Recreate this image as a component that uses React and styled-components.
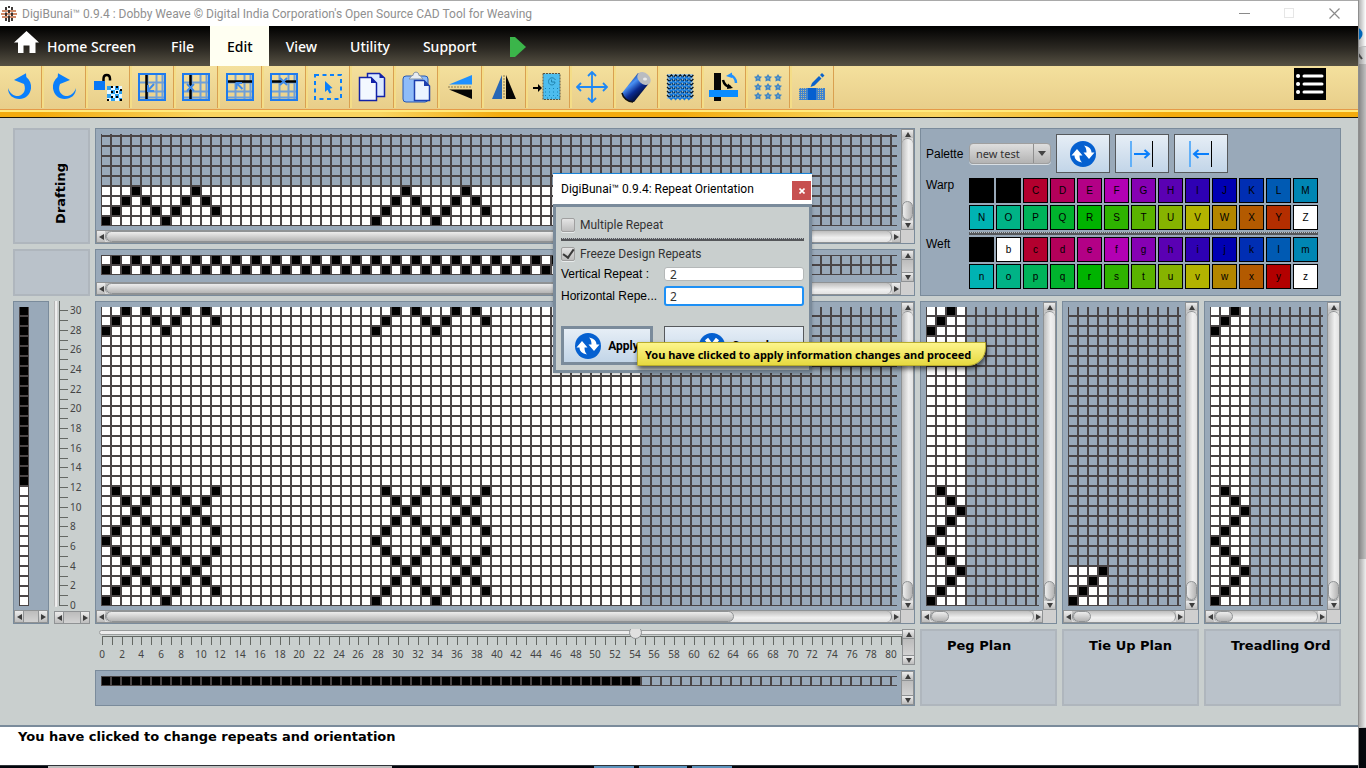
import React from "react";
import styled, { createGlobalStyle } from "styled-components";

const ui = '"Noto Sans", "Open Sans", sans-serif';
const compact = 'Roboto, "Noto Sans", sans-serif';
const plain = '"Liberation Sans", Arial, sans-serif';
const heavy = '"DejaVu Sans", Verdana, sans-serif';
const slate = "#99a9b9";
const slateEdge = "#7a8b9b";

const GlobalStyle = createGlobalStyle`
  * { box-sizing: border-box; }
  body { margin: 0; background: #05080d; font-family: ${plain}; font-size: 12px; color: #000; }
  button, input, select { font: inherit; margin: 0; padding: 0; border-radius: 0; }
`;

/* ---------- window frame ---------- */

const Desktop = styled.div`
  display: grid;
  grid-template-columns: minmax(0, 1fr) 8px;
  min-height: 100vh;
  overflow: hidden;
`;
const Column = styled.div`
  display: flex;
  flex-direction: column;
`;
const AppWindow = styled.div`
  position: relative;
  flex: 1;
  display: flex;
  flex-direction: column;
  background: #c9cfce;
  border-top: 1px solid #a9a9a9;
`;
const TitleBar = styled.header`
  display: flex;
  align-items: center;
  height: 25px;
  background: #fff;
  padding: 0 1px;
`;
const TitleText = styled.h1`
  flex: 1;
  margin: 0 0 0 5px;
  font: 400 12px/16px ${compact};
  color: #8f8f8f;
  white-space: nowrap;
`;
const CaptionButton = styled.button`
  width: 45px;
  height: 25px;
  border: 0;
  background: none;
  color: ${(p) => (p.disabled ? "#e6e6e6" : "#8a8a8a")};
  display: grid;
  place-items: center;
`;

/* ---------- menu ---------- */

const MenuBar = styled.nav`
  display: flex;
  height: 40px;
  background: linear-gradient(#000, #2b2822 55%, #565143);
`;
const MenuLink = styled.a`
  display: flex;
  align-items: center;
  padding: 2px 16px 0 17px;
  font: 500 14px/38px ${ui};
  text-decoration: none;
  white-space: nowrap;
  color: ${(p) => (p.$active ? "#000" : "#fff")};
  background: ${(p) => (p.$active ? "#fffff2" : "none")};
`;
const HomeLink = styled(MenuLink)`
  padding-left: 14px;
  padding-right: 18px;
  gap: 8px;
  & svg { margin-bottom: 10px; }
`;

/* ---------- tool bar ---------- */

const ToolBar = styled.div`
  display: flex;
  height: 43px;
  background: linear-gradient(#f4e09d, #e8ce8a);
`;
const ToolGroup = styled.div`
  display: flex;
`;
const Tool = styled.button`
  width: 44px;
  height: 42px;
  padding: 0 6px 0 4px;
  border: solid #f4dd88;
  border-width: 0 0 0 2px;
  box-shadow: inset -1px 0 #d9a050;
  background: none;
  display: grid;
  place-items: center;
  &:first-child {
    width: 42px;
    border-left: 0;
  }
`;
const ListTool = styled.button`
  margin: 2px 32px 0 auto;
  width: 32px;
  height: 32px;
  border: 0;
  background: none;
`;
const GoldStrip = styled.div`
  height: 9px;
  border-top: 1px solid #e59a48;
  border-bottom: 1px solid #1c1608;
  background:
    linear-gradient(#ffe97c, #ffe97c) 0 0 / 100% 2px no-repeat,
    linear-gradient(90deg, #f3ab0e 3%, #f9d460 15%, #f9d460 28%, #f3ab0e 37%, #f3ab0e 50%, #f7d055 62%, #f9d460 69%, #f3ab0e 86%);
`;

/* ---------- workspace ---------- */

const Workspace = styled.main`
  display: grid;
  grid-template-columns: 36px 36px minmax(0, 1fr) 137px 137px 137px;
  grid-template-rows: 116px 47px 323px 36px 36px;
  gap: 5px;
  padding: 10px 17px 19px 13px;
`;
const CaptionBox = styled.section`
  grid-area: ${(p) => p.$area};
  display: flex;
  align-items: ${(p) => (p.$vertical ? "center" : "flex-start")};
  justify-content: ${(p) => (p.$vertical ? "flex-end" : "flex-start")};
  padding: ${(p) => (p.$vertical ? "14px 18px 0 0" : "6px 0 0 25px")};
  background: #bac2ca;
  border: 2px solid #afb6bd;
  overflow: hidden;
`;
const Caption = styled.h2`
  margin: 0;
  font: 700 13px/18px ${heavy};
  white-space: nowrap;
  ${(p) => p.$vertical && "writing-mode: vertical-rl; transform: rotate(180deg);"}
`;
const Pane = styled.section`
  grid-area: ${(p) => p.$area};
  display: grid;
  grid-template-columns: minmax(0, 1fr) auto;
  grid-template-rows: minmax(0, 1fr) auto;
  background: ${slate};
  border: 1px solid ${slateEdge};
  min-width: 0;
`;
const View = styled.div`
  padding: 5px 0 0 5px;
  overflow: hidden;
  & svg { display: block; }
`;
const Corner = styled.div`
  background: #cfcfcf;
`;
const Bar = styled.div`
  display: flex;
  flex-direction: ${(p) => (p.$v ? "column" : "row")};
  ${(p) => (p.$v ? "width: 13px;" : "height: 13px;")}
  background: linear-gradient(${(p) => (p.$v ? "90deg" : "180deg")}, #c4c4c4, #dcdcdc);
  border: 1px solid #8f9294;
`;
const BarButton = styled.button`
  flex: none;
  width: ${(p) => (p.$v ? "11px" : "8px")};
  height: ${(p) => (p.$v ? "8px" : "11px")};
  border: 0;
  background: linear-gradient(#ececec, #bdbdbd);
  display: grid;
  place-items: center;
`;
const Track = styled.div`
  flex: 1;
  display: flex;
  flex-direction: ${(p) => (p.$v ? "column" : "row")};
  justify-content: ${(p) => (p.$end ? "flex-end" : "flex-start")};
  ${(p) => (p.$v ? "border-width: 1px 0;" : "border-width: 0 1px;")}
  border-style: solid;
  border-color: #8f9294;
  border-radius: ${(p) => (p.$empty ? "0" : "6px")};
  background: ${(p) =>
    p.$empty
      ? "linear-gradient(#bcbcbc, #d2d2d2)"
      : p.$v
        ? "linear-gradient(90deg, #bdbdbd, #f0f0f0 60%, #e2e2e2)"
        : "linear-gradient(#bdbdbd, #f0f0f0 60%, #e2e2e2)"};
`;
const Thumb = styled.div`
  ${(p) => (p.$v ? "height" : "width")}: ${(p) => p.$size};
  ${(p) => (p.$v ? "width" : "height")}: 11px;
  border: 1px solid #8f9294;
  border-radius: 6px;
  background: linear-gradient(${(p) => (p.$v ? "90deg" : "180deg")}, #ededed, #b4b4b4);
`;

function Scroll({ v, thumb, end }) {
  const [a, b] = v ? ["0,5 3,0 6,5", "0,0 6,0 3,5"] : ["5,0 0,3 5,6", "0,0 5,3 0,6"];
  const size = v ? { width: 6, height: 5 } : { width: 5, height: 6 };
  return (
    <Bar $v={v}>
      <BarButton $v={v} type="button" aria-label={v ? "Scroll up" : "Scroll left"}>
        <svg {...size}><polygon points={a} fill="#3c3c3c" /></svg>
      </BarButton>
      <Track $v={v} $end={end} $empty={!thumb}>{thumb && <Thumb $v={v} $size={thumb} />}</Track>
      <BarButton $v={v} type="button" aria-label={v ? "Scroll down" : "Scroll right"}>
        <svg {...size}><polygon points={b} fill="#3c3c3c" /></svg>
      </BarButton>
    </Bar>
  );
}

/* ---------- weave drawing: 8px cells on a 10px pitch ---------- */

function Weave({ width, height, top = 0, filled, marks }) {
  const h = [];
  for (let y = top - 2; y < height; y += 10) h.push(`M0 ${y}h${width}v2H0z`);
  const v = [];
  for (let x = -1; x < width; x += 10) v.push(`M${x} 0h2v${height}h-2z`);
  return (
    <svg width={width} height={height} shapeRendering="crispEdges">
      {filled && (
        <rect x="0" y={top + filled.row * 10} width={filled.cols * 10} height={height - top - filled.row * 10} fill="#fff" />
      )}
      <path d={h.join("") + v.join("")} fill="#4a4546" />
      <path d={marks.map(([c, r]) => `M${c * 10 + 1} ${top + r * 10}h8v8h-8z`).join("")} fill="#000" />
    </svg>
  );
}

/* columns lifted by each shaft, and the shaft used by each pick from the bottom up */
const threads = [[0, 6], [1, 5, 7, 11], [2, 4, 8, 10], [3, 9]];
const treadles = [0, 1, 2, 3, 2, 1, 0, 1, 2, 3, 2, 1];
const twice = (cells) => cells.concat(cells.map(([c, r]) => [c + 27, r]));
const draft = twice(threads.flatMap((cols, i) => cols.map((c) => [c, 8 - i])));
const picks = [...treadles.map((shaft, i) => [29 - i, shaft]), [2, 0], [1, 1], [0, 2]];
const design = twice(picks.flatMap(([row, shaft]) => threads[shaft].map((c) => [c, row])));
const peg = picks.map(([row, shaft]) => [shaft, row]);
const plain54 = Array.from({ length: 54 }, (_, c) => [c, c % 2 ? 0 : 1]);
const warpLine = Array.from({ length: 54 }, (_, c) => [c, 0]);
const weftLine = Array.from({ length: 18 }, (_, r) => [0, r]);
const tie = [0, 1, 2, 3].map((i) => [i, 29 - i]);

function PlanPane({ area, filled, marks }) {
  return (
    <Pane $area={area}>
      <View><Weave width={113} height={299} filled={filled} marks={marks} /></View>
      <Scroll v thumb="19px" end />
      <Scroll thumb="18px" />
      <Corner />
    </Pane>
  );
}

/* ---------- rulers ---------- */

const SideRuler = styled.section`
  grid-area: 3 / 2 / 4 / 3;
  display: grid;
  grid-template-columns: 5px 1fr;
  grid-template-rows: minmax(0, 1fr) auto;
  overflow: hidden;
  & > :last-child { grid-column: 1 / 3; }
`;
const SideRange = styled.input`
  appearance: none;
  writing-mode: vertical-lr;
  direction: rtl;
  width: 4px;
  height: 306px;
  border-radius: 0 0 3px 3px;
  background: linear-gradient(90deg, #9b9b9b, #f2f2f2 40%, #ececec 80%, #a5a5a5);
  &::-webkit-slider-thumb { appearance: none; width: 0; height: 0; }
`;
const BaseRuler = styled.section`
  grid-area: 4 / 3 / 5 / 4;
  display: grid;
  grid-template-columns: minmax(0, 1fr) auto;
`;
const BaseScale = styled.div`
  overflow: hidden;
  & svg { display: block; }
`;
const BaseRange = styled.input`
  appearance: none;
  position: relative;
  z-index: 1;
  display: block;
  width: 808px;
  height: 7px;
  && { margin-left: 4px; }
  background: none;
  &::-webkit-slider-runnable-track {
    height: 5px;
    border: 1px solid #9a9d9d;
    border-radius: 3px;
    background: #ececec;
  }
  &::-webkit-slider-thumb {
    appearance: none;
    width: 13px;
    height: 13px;
    margin-top: -5px;
    border: 1px solid #8f9294;
    border-radius: 50%;
    background: #e0e0e0;
  }
`;

function SideTicks() {
  return (
    <svg width="31" height="311" shapeRendering="crispEdges">
      <path d="M0.5 0V305" stroke="#646864" />
      {Array.from({ length: 31 }, (_, n) => (
        <path key={n} d={`M0 ${Math.round(304 - n * 9.83) + 0.5}H9`} stroke="#646864" />
      ))}
      {Array.from({ length: 16 }, (_, n) => (
        <text key={n} x="11" y={Math.round(308 - n * 19.66)} fontFamily="Noto Sans" fontSize="10" fill="#444">{n * 2}</text>
      ))}
    </svg>
  );
}

function BaseTicks() {
  return (
    <svg width="812" height="29" shapeRendering="crispEdges">
      <path d="M7 0.5H812" stroke="#646864" />
      {Array.from({ length: 82 }, (_, n) => (
        <path key={n} d={`M${Math.round(7 + n * 9.865) + 0.5} 0V9`} stroke="#646864" />
      ))}
      {Array.from({ length: 41 }, (_, n) => (
        <text key={n} x={Math.round(7 + n * 19.73)} y="22" textAnchor="middle" fontFamily="Noto Sans" fontSize="10" fill="#444">{n * 2}</text>
      ))}
    </svg>
  );
}

/* ---------- palette ---------- */

const PalettePanel = styled.section`
  grid-area: 1 / 4 / 3 / 7;
  display: grid;
  grid-template-columns: 43px auto;
  grid-template-rows: 42px 52px 3px 52px;
  row-gap: 2px;
  justify-content: start;
  padding: 5px;
  background: ${slate};
  border: 1px solid ${slateEdge};
`;
const PaletteLabel = styled.label`
  font: 12px/14px ${plain};
  padding-top: ${(p) => (p.$tall ? "13px" : "0")};
`;
const PaletteTools = styled.div`
  display: flex;
  align-items: center;
  gap: 5px;
  height: 39px;
`;
const Combo = styled.div`
  display: flex;
  width: 82px;
  height: 21px;
  border: 1px solid #9f9f9f;
  border-radius: 4px;
  background: linear-gradient(#dedede, #b3b3b3);
  box-shadow: 0 1px #d9dfe4;
`;
const ComboSelect = styled.select`
  flex: 1;
  min-width: 0;
  appearance: none;
  border: 0;
  padding-left: 6px;
  background: none;
  color: #333;
  font: 11px/19px ${ui};
`;
const ComboArrow = styled.span`
  width: 17px;
  border-left: 1px solid #8f8f8f;
  display: grid;
  place-items: center;
`;
const IconButton = styled.button`
  width: 54px;
  height: 39px;
  border: 1px solid #56595c;
  background: linear-gradient(#e6eef6, #c2d5e8);
  display: grid;
  place-items: center;
`;
const Swatches = styled.div`
  display: grid;
  grid-template-columns: repeat(13, 25px);
  grid-auto-rows: 25px;
  gap: 2px;
`;
const Swatch = styled.button`
  border: 1px solid #000;
  background: ${(p) => p.$c};
  color: #000;
  font: 10px/12px ${plain};
`;
const Rule = styled.hr`
  margin: 0;
  width: 100%;
  height: 3px;
  border: 0;
  grid-column: ${(p) => p.$col || "auto"};
  background: repeating-linear-gradient(90deg, #56595c 0 1px, #b9bfc4 1px 2px) 0 0 / 100% 1px no-repeat, #55575a;
`;

const shades = [
  "#b3002e", "#b3005a", "#b30086", "#b300b3", "#8600b3", "#5a00b3", "#2e00b3", "#0000b3", "#002eb3", "#005ab3", "#0086b3",
  "#00b3b3", "#00b386", "#00b35a", "#00b32e", "#00b300", "#2eb300", "#5ab300", "#86b300", "#b3b300", "#b38600", "#b35a00",
];
const warp = ["#000", "#000", ...shades, "#b32e00", "#fff"];
const weft = ["#000", "#fff", ...shades, "#b30000", "#fff"];

/* ---------- dialog ---------- */

const Dialog = styled.div`
  position: absolute;
  left: 553px;
  top: 172px;
  width: 259px;
  border-top: 1px solid #1883d7;
  background: #c9cfce;
  box-shadow: 0 1px 3px rgba(0, 0, 0, 0.25);
`;
const DialogTitle = styled.div`
  display: flex;
  align-items: center;
  height: 30px;
  padding: 0 1px 0 8px;
  background: #fff;
`;
const DialogHeading = styled.h2`
  flex: 1;
  margin: 0;
  font: 400 12px/16px ${compact};
  white-space: nowrap;
`;
const CloseButton = styled.button`
  width: 19px;
  height: 19px;
  margin-top: 3px;
  border: 0;
  background: #c75050;
  display: grid;
  place-items: center;
`;
const Form = styled.form`
  display: flex;
  flex-direction: column;
  gap: 5px;
  padding: 10px 5px 5px;
  border: 3px solid ${slateEdge};
`;
const CheckRow = styled.label`
  display: flex;
  align-items: center;
  gap: 5px;
  height: 16px;
  font: 12px/16px ${compact};
  color: #333;
`;
const Check = styled.input`
  appearance: none;
  width: 14px;
  height: 14px;
  border: 1px solid #a0a0a0;
  border-radius: 2px;
  background: linear-gradient(#e4e4e4, #bdbdbd);
  box-shadow: 0 1px #e8ecec;
  display: grid;
  place-items: center;
  &:checked::before {
    content: "";
    width: 5px;
    height: 9px;
    margin-top: -3px;
    border: solid #3a3a3a;
    border-width: 0 2px 2px 0;
    transform: rotate(35deg);
  }
`;
const FieldRow = styled.label`
  display: grid;
  grid-template-columns: 103px 140px;
  grid-template-rows: 100%;
  align-items: center;
  height: ${(p) => p.$h};
  font: 12px/14px ${plain};
  white-space: nowrap;
`;
const Field = styled.input`
  width: 100%;
  height: 100%;
  min-width: 0;
  padding-left: ${(p) => (p.$focus ? "4px" : "5px")};
  border: ${(p) => (p.$focus ? "2px solid #1e90f5" : "1px solid #b4b8b8")};
  border-radius: 3px;
  background: #fff;
  color: #333;
  font: 12px/16px ${ui};
  outline: none;
`;
const Actions = styled.div`
  display: flex;
  gap: 11px;
  margin-top: 15px;
`;
const ActionButton = styled.button`
  flex: ${(p) => (p.$wide ? "1" : "0 0 92px")};
  height: 39px;
  display: flex;
  align-items: center;
  justify-content: center;
  gap: 7px;
  border: ${(p) => (p.$wide ? "1px solid #56595c" : `3px solid ${slateEdge}`)};
  background: linear-gradient(#e6eef6, #c2d5e8);
  font: 700 12px/16px ${compact};
`;
const Tip = styled.div`
  position: absolute;
  left: 637px;
  top: 341px;
  height: 24px;
  padding: 0 14px 0 7px;
  border: 1px solid #b9ad2c;
  border-radius: 0 0 18px 0;
  background: linear-gradient(#fdf58c, #e6d940);
  box-shadow: 1px 3px 5px rgba(0, 0, 0, 0.6);
  font: 700 11px/23px ${ui};
  white-space: nowrap;
`;

/* ---------- bottom and right edges ---------- */

const StatusBar = styled.footer`
  flex: 1;
  min-height: 40px;
  padding: 1px 18px;
  border-top: 2px solid ${slateEdge};
  background: #fff;
  font: 700 13px/18px ${heavy};
`;
const TaskEdge = styled.div`
  height: 3px;
  border-top: 1px solid #30343a;
  background: linear-gradient(90deg, #02060c 48px, #bfbfbf 48px 392px, #02060c 392px 594px, #5b93bd 594px 634px, #02060c 634px 639px, #5b93bd 639px 687px, #02060c 687px 692px, #5b93bd 692px 732px, #02060c 732px);
`;
const BackWindow = styled.div`
  display: flex;
  flex-direction: column;
  border-left: 1px solid #8e8e8e;
`;
const BackPart = styled.div`
  flex: ${(p) => p.$flex || `0 0 ${p.$h}`};
  background: linear-gradient(90deg, rgba(0, 0, 0, 0.3), rgba(0, 0, 0, 0) 7px), ${(p) => p.$c};
  border-bottom: ${(p) => (p.$line ? "1px solid #c0c0c0" : "0")};
  overflow: hidden;
  & svg { display: block; }
`;

/* ---------- icons ---------- */

const B = "#0a7ffb";

function Sync({ size = 26 }) {
  return (
    <svg width={size} height={size} viewBox="0 0 26 26">
      <circle cx="13" cy="13" r="13" fill="#0560d0" />
      <path d="M7 8L1.500 14.500H4.500C4.500 18 7 20.500 12 21.500C10 19.500 9.500 17 9.500 14.500H12.500z" fill="#fff" />
      <path d="M19 18L24.500 11.500H21.500C21.500 8 19 5.500 14 4.500C16 6.500 16.500 9 16.500 11.500H13.500z" fill="#fff" />
    </svg>
  );
}
const GridBase = ({ children }) => (
  <>
    <path d="M3 11.500H29M3 20.500H29M3 26.500H29M11.500 3V29M20.500 3V29M26.500 3V29" stroke="#6f9fd8" strokeWidth="2" fill="none" />
    <rect x="3" y="3" width="26" height="26" fill="none" stroke="#1f7bee" strokeWidth="2" />
    {children}
  </>
);
const star = "M0-4L1.400-1.800L4-1.300L2.200.7L2.600 3.500L0 2.400L-2.600 3.500L-2.200.7L-4-1.300L-1.400-1.800z";
const curl = "M10 9L22 2.300L22.300 6C26 9 27.500 13 27 17.500C26 24 21 28 15.500 28C9 28 4 24 4 17C6 23 10.500 25.500 14.500 25C19.500 24 22.500 19 20 13z";
const zigzag = (offset) =>
  Array.from({ length: 6 }, (_, i) => `M${3 + offset} ${4 + i * 4 + offset}` + "l2.200 2.200l2.200-2.200".repeat(offset ? 5 : 6)).join("");

const tools = [
  ["Undo", <path d={curl} fill={B} />],
  ["Redo", <path d={curl} fill={B} transform="matrix(-1 0 0 1 32 0)" />],
  ["Lock design", <>
    <path d="M11.500 10V8C11.500 2.500 18 2.500 18 8V9.500" fill="none" stroke="#000" strokeWidth="2.500" />
    <rect x="2" y="10" width="11" height="9" fill="#0877f5" />
    <rect x="15" y="15" width="15" height="15" fill="#2b9ff0" />
    <path d="M19 15h4v4h-4zM27 15h3v4h-3zM15 19h4v4h-4zM23 19h4v4h-4zM19 23h4v4h-4zM27 23h3v4h-3zM15 27h4v3h-4zM23 27h4v3h-4z" fill="#e6f8ff" />
    <path d="M19 15h2v2h-2zM24 15h2v2h-2zM28 18h2v2h-2zM19 20h2v2h-2zM24 20h2v2h-2zM19 25h2v2h-2zM24 25h2v2h-2zM15 28h2v2h-2zM28 28h2v2h-2z" fill="#000" />
  </>],
  ["Insert warp", <GridBase><path d="M10.500 4V28" stroke="#000" strokeWidth="2.500" /><path d="M18 13L12.500 19M12 14V20H18" stroke="#3f8bea" strokeWidth="2" fill="none" /></GridBase>],
  ["Delete warp", <GridBase><path d="M10.500 4V28" stroke="#000" strokeWidth="2.500" /><path d="M7 13L14 20M14 13L7 20" stroke="#3f8bea" strokeWidth="1.800" /></GridBase>],
  ["Insert weft", <GridBase><path d="M4 10.500H28" stroke="#000" strokeWidth="2.500" /><path d="M18.500 18L13 12.500M12.500 18V12H18" stroke="#3f8bea" strokeWidth="2" fill="none" /></GridBase>],
  ["Delete weft", <GridBase><path d="M4 10.500H28" stroke="#000" strokeWidth="2.500" /><path d="M12 7L19 14M19 7L12 14" stroke="#3f8bea" strokeWidth="1.800" /></GridBase>],
  ["Select", <><rect x="3" y="4" width="26" height="24" fill="none" stroke={B} strokeWidth="2" strokeDasharray="4 3.500" /><path d="M13 10V21L15.500 18.800L17.500 22.500L19.500 21.500L17.700 17.700L20.500 17z" fill={B} /></>],
  ["Copy", <><path d="M11.500 2.500H23.500L28.500 7V25.500H11.500z" fill="#dbe9ff" stroke="#1222a8" strokeWidth="1.500" /><path d="M3.500 6.500H15L20.500 12V29.500H3.500z" fill="#f3f8ff" stroke="#1222a8" strokeWidth="1.500" /><path d="M15 6.500V12H20.500zM23.500 2.500V7H28.500z" fill="#1222a8" /></>],
  ["Paste", <><rect x="3" y="5" width="25" height="26" rx="3" fill="#8fbcf8" stroke="#2456b4" /><path d="M9 8L12 4.500H13C13 0 19 0 19 4.500H20L23 8z" fill="#e8edf2" stroke="#8794a5" /><path d="M14.500 9.500H24L29.500 15V29.500H14.500z" fill="#eaf4ff" stroke="#1c3fae" strokeWidth="1.500" /><path d="M24 9.500V15H29.500z" fill="#1c3fae" /></>],
  ["Flip vertical", <><path d="M5 13.500L28 4V13.500z" fill="#1e90ff" /><path d="M5 18.500L28 28V18.500z" fill="#050505" /><path d="M4 16H28" stroke="#8a7a50" strokeDasharray="2 1" /></>],
  ["Flip horizontal", <><path d="M4 28L14 4V28z" fill="#2767b5" /><path d="M28 28L18 4V28z" fill="#050505" /><path d="M16 4V28" stroke="#8a7a50" strokeDasharray="2 1" /></>],
  ["Insert motif", <><path d="M1 16h5v-3l4 4-4 4v-3H1z" fill="#000" /><rect x="11" y="2.500" width="17" height="26" fill="#4dbdee" stroke="#5b5340" strokeDasharray="2 1" /><path d="M13 17.500H28M13 21H28M13 24.500H28M15 27H28" stroke="#1685b8" strokeDasharray="1 3" /><path d="M23.500 9C21 5 16.500 7 16.500 10.500C16.500 15 23 15 23 11H19.500V8.500" fill="none" stroke="#2182ad" /></>],
  ["Move", <path d="M16 1V31M1 16H31M12 5L16 1L20 5M12 27L16 31L20 27M5 12L1 16L5 20M27 12L31 16L27 20" fill="none" stroke="#1e88f5" strokeWidth="1.800" />],
  ["Yarn", <>
    <defs>
      <linearGradient id="spool" x1="0.200" y1="0.150" x2="0.750" y2="0.850">
        <stop offset="0" stopColor="#0b2a80" /><stop offset="0.300" stopColor="#4a92f5" /><stop offset="0.600" stopColor="#0a2a90" /><stop offset="1" stopColor="#01030f" />
      </linearGradient>
    </defs>
    <path d="M2 22L18 2L30 11L14 31C8 31 3 27 2 22z" fill="url(#spool)" />
    <ellipse cx="24" cy="7.500" rx="7.500" ry="5.500" transform="rotate(42 24 7.500)" fill="#b9bcc0" />
    <ellipse cx="25" cy="8" rx="2" ry="1.500" fill="#e9e9e9" />
    <path d="M2 22C3 27 8 31 13 31" fill="none" stroke="#111" strokeWidth="1.500" />
  </>],
  ["Fabric", <>
    <path d="M3 3H29V28H3z" fill="#9fc4d8" />
    <path d={zigzag(0)} fill="none" stroke="#07121d" strokeWidth="1.300" />
    <path d={zigzag(2)} fill="none" stroke="#1677d8" strokeWidth="1.700" />
  </>],
  ["Rotate", <><rect x="6" y="2" width="7" height="28" fill="#080808" /><rect x="1" y="19" width="29" height="7" fill="#0a8cff" /><path d="M15 9C16 13 19 16 23 16" fill="none" stroke="#000" strokeWidth="2.500" /><path d="M28 12C28 8 25 5 22 4" fill="none" stroke="#1e90ff" strokeWidth="2.500" /><path d="M18 5L24 1.500V7z" fill="#1e90ff" /><path d="M20 12.500L25 17L19 18z" fill="#000" /></>],
  ["Repeats", <>{[7, 16, 25].flatMap((y) => [6, 16, 26].map((x) => (
    <g key={`${x}-${y}`} transform={`translate(${x} ${y})`}>
      <path d={star} fill="#3f86c6" />
      <circle r="0.800" fill="#a9bcb4" />
    </g>
  )))}</>],
  ["Edit fabric", <><path d="M3 17H29V29H3z" fill="#3f83cf" /><path d="M12 17h8v12h-8z" fill="#0560d0" /><path d="M3.500 17V29M5.500 17V29M7.500 17V29M9.500 17V29M22.500 17V29M24.500 17V29M26.500 17V29" stroke="#bdb98f" strokeDasharray="1 1" /><path d="M14.500 16L16 12L23 5L25.500 7.500L18.500 14.500zM24 4L26 2L28.500 4.500L26.500 6.500z" fill="#0b62cc" /></>],
];

const App = () => (
  <>
    <GlobalStyle />
    <Desktop>
      <Column>
        <AppWindow>
          <TitleBar>
            <svg width="16" height="16" viewBox="0 0 16 16">
              <path d="M1 5H15M0 8H16M1 11H15" stroke="#c0643a" strokeWidth="1.600" />
              <path d="M5 1V4M5 6.500V10M5 12V15M8 0V2M8 4V7M8 9.500V16M11 1V4M11 6.500V10M11 12V15" stroke="#2a2624" strokeWidth="1.800" />
            </svg>
            <TitleText>DigiBunai™ 0.9.4 : Dobby Weave © Digital India Corporation's Open Source CAD Tool for Weaving</TitleText>
            <CaptionButton aria-label="Minimize"><svg width="11" height="11"><path d="M0 5.500H11" stroke="currentColor" /></svg></CaptionButton>
            <CaptionButton aria-label="Maximize" disabled><svg width="11" height="11"><rect x="0.500" y="0.500" width="9" height="9" fill="none" stroke="currentColor" /></svg></CaptionButton>
            <CaptionButton aria-label="Close"><svg width="11" height="11"><path d="M0.500 0.500L10.500 10.500M10.500 0.500L0.500 10.500" stroke="currentColor" strokeWidth="1.200" /></svg></CaptionButton>
          </TitleBar>

          <MenuBar>
            <HomeLink href="#home">
              <svg width="25" height="22" viewBox="0 0 25 22"><path d="M12.500 0L25 11.500H21.500V22H15.500V14.500H9.500V22H4V11.500H0z" fill="#fff" /></svg>
              Home Screen
            </HomeLink>
            <MenuLink href="#file">File</MenuLink>
            <MenuLink href="#edit" $active>Edit</MenuLink>
            <MenuLink href="#view">View</MenuLink>
            <MenuLink href="#utility">Utility</MenuLink>
            <MenuLink href="#support">Support</MenuLink>
            <MenuLink href="#run" aria-label="Run">
              <svg width="16" height="20"><path d="M0 0H5L16 10L5 20H0z" fill="#3bb54a" /></svg>
            </MenuLink>
          </MenuBar>

          <ToolBar>
            <ToolGroup role="toolbar" aria-label="Edit tools">
              {tools.map(([name, art]) => (
                <Tool key={name} type="button" aria-label={name}><svg width="32" height="32" viewBox="0 0 32 32">{art}</svg></Tool>
              ))}
            </ToolGroup>
            <ListTool type="button" aria-label="List">
              <svg width="32" height="32">
                <rect width="32" height="32" fill="#000" />
                <path d="M10 8H28M10 16H28M10 24H28" stroke="#fff" strokeWidth="3" strokeLinecap="round" />
                <path d="M4 8h.1M4 16h.1M4 24h.1" stroke="#fff" strokeWidth="4" strokeLinecap="round" />
              </svg>
            </ListTool>
          </ToolBar>
          <GoldStrip />

          <Workspace>
            <CaptionBox $area="1 / 1 / 2 / 3" $vertical><Caption $vertical>Drafting</Caption></CaptionBox>
            <CaptionBox $area="2 / 1 / 3 / 3" />
            <Pane $area="1 / 3 / 2 / 4">
              <View><Weave width={796} height={92} top={3} filled={{ row: 5, cols: 54 }} marks={draft} /></View>
              <Scroll v thumb="19px" end />
              <Scroll thumb="80%" />
              <Corner />
            </Pane>
            <Pane $area="2 / 3 / 3 / 4">
              <View><Weave width={796} height={20} top={1} filled={{ row: 0, cols: 54 }} marks={plain54} /></View>
              <Scroll v />
              <Scroll thumb="80%" />
              <Corner />
            </Pane>
            <Pane $area="3 / 1 / 4 / 2">
              <View><Weave width={10} height={299} filled={{ row: 0, cols: 1 }} marks={weftLine} /></View>
              <span />
              <Scroll />
            </Pane>
            <SideRuler>
              <SideRange type="range" aria-label="Picks" max="31" defaultValue="31" />
              <SideTicks />
              <Scroll />
            </SideRuler>
            <Pane $area="3 / 3 / 4 / 4">
              <View><Weave width={796} height={299} filled={{ row: 0, cols: 54 }} marks={design} /></View>
              <Scroll v thumb="19px" end />
              <Scroll thumb="80%" />
              <Corner />
            </Pane>
            <BaseRuler>
              <BaseScale>
                <BaseRange type="range" aria-label="Ends" max="81" defaultValue="54" />
                <BaseTicks />
              </BaseScale>
              <Scroll v />
            </BaseRuler>
            <Pane $area="5 / 3 / 6 / 4">
              <View><Weave width={796} height={10} top={1} marks={warpLine} /></View>
              <Scroll v />
            </Pane>

            <PalettePanel>
              <PaletteLabel htmlFor="palette" $tall>Palette</PaletteLabel>
              <PaletteTools>
                <Combo>
                  <ComboSelect id="palette" defaultValue="new test"><option>new test</option></ComboSelect>
                  <ComboArrow><svg width="8" height="5"><polygon points="0,0 8,0 4,5" fill="#444" /></svg></ComboArrow>
                </Combo>
                <IconButton type="button" aria-label="Switch"><Sync /></IconButton>
                <IconButton type="button" aria-label="Warp to weft">
                  <svg width="24" height="26"><path d="M1 0V26" stroke="#62b0f8" strokeWidth="2" /><path d="M22.500 0V26" stroke="#000" /><path d="M4 13H19M14.500 9L19 13L14.500 17" fill="none" stroke={B} strokeWidth="2" /></svg>
                </IconButton>
                <IconButton type="button" aria-label="Weft to warp">
                  <svg width="24" height="26"><path d="M1 0V26" stroke="#62b0f8" strokeWidth="2" /><path d="M22.500 0V26" stroke="#000" /><path d="M20 13H5M9.500 9L5 13L9.500 17" fill="none" stroke={B} strokeWidth="2" /></svg>
                </IconButton>
              </PaletteTools>
              <PaletteLabel as="span">Warp</PaletteLabel>
              <Swatches>{warp.map((c, i) => <Swatch key={i} type="button" $c={c}>{String.fromCharCode(65 + i)}</Swatch>)}</Swatches>
              <Rule $col="2" />
              <PaletteLabel as="span">Weft</PaletteLabel>
              <Swatches>{weft.map((c, i) => <Swatch key={i} type="button" $c={c}>{String.fromCharCode(97 + i)}</Swatch>)}</Swatches>
            </PalettePanel>

            <PlanPane area="3 / 4 / 4 / 5" filled={{ row: 0, cols: 4 }} marks={peg} />
            <PlanPane area="3 / 5 / 4 / 6" filled={{ row: 26, cols: 4 }} marks={tie} />
            <PlanPane area="3 / 6 / 4 / 7" filled={{ row: 0, cols: 4 }} marks={peg} />
            <CaptionBox $area="4 / 4 / 6 / 5"><Caption>Peg Plan</Caption></CaptionBox>
            <CaptionBox $area="4 / 5 / 6 / 6"><Caption>Tie Up Plan</Caption></CaptionBox>
            <CaptionBox $area="4 / 6 / 6 / 7"><Caption>Treadling Ord</Caption></CaptionBox>
          </Workspace>

          <StatusBar>You have clicked to change repeats and orientation</StatusBar>

          <Dialog role="dialog" aria-labelledby="dialog-title">
            <DialogTitle>
              <DialogHeading id="dialog-title">DigiBunai™ 0.9.4: Repeat Orientation</DialogHeading>
              <CloseButton type="button" aria-label="Close"><svg width="6" height="6"><path d="M0.500 0.500L5.500 5.500M5.500 0.500L0.500 5.500" stroke="#fff" strokeWidth="1.600" /></svg></CloseButton>
            </DialogTitle>
            <Form>
              <CheckRow><Check type="checkbox" />Multiple Repeat</CheckRow>
              <Rule />
              <CheckRow><Check type="checkbox" defaultChecked />Freeze Design Repeats</CheckRow>
              <FieldRow $h="14px">Vertical Repeat :<Field type="text" defaultValue="2" /></FieldRow>
              <FieldRow $h="20px">Horizontal Repe...<Field $focus type="text" defaultValue="2" /></FieldRow>
              <Actions>
                <ActionButton type="button"><Sync />Apply</ActionButton>
                <ActionButton type="button" $wide>
                  <svg width="26" height="26" viewBox="0 0 26 26"><circle cx="13" cy="13" r="13" fill="#0560d0" /><path d="M7.500 6L18.500 20M18.500 6L7.500 20" stroke="#fff" strokeWidth="4" /></svg>
                  Cancel
                </ActionButton>
              </Actions>
            </Form>
          </Dialog>
          <Tip role="tooltip">You have clicked to apply information changes and proceed</Tip>
        </AppWindow>
        <TaskEdge />
      </Column>

      <BackWindow>
        <BackPart $h="47px" $c="#fff" $line>
          <svg width="8" height="46"><circle cx="-3" cy="34" r="6.500" fill="#0067b8" /></svg>
        </BackPart>
        <BackPart $h="17px" $c="#e4e4e4"><svg width="8" height="17"><path d="M-3 12L0 8L3 12" fill="none" stroke="#444" strokeWidth="2" /></svg></BackPart>
        <BackPart $h="495px" $c="#c1c1c1" />
        <BackPart $h="143px" $c="#efefef" />
        <BackPart $h="26px" $c="#efefef" $line />
        <BackPart $flex="1" $c="#05080d" />
      </BackWindow>
    </Desktop>
  </>
);

export default App;
